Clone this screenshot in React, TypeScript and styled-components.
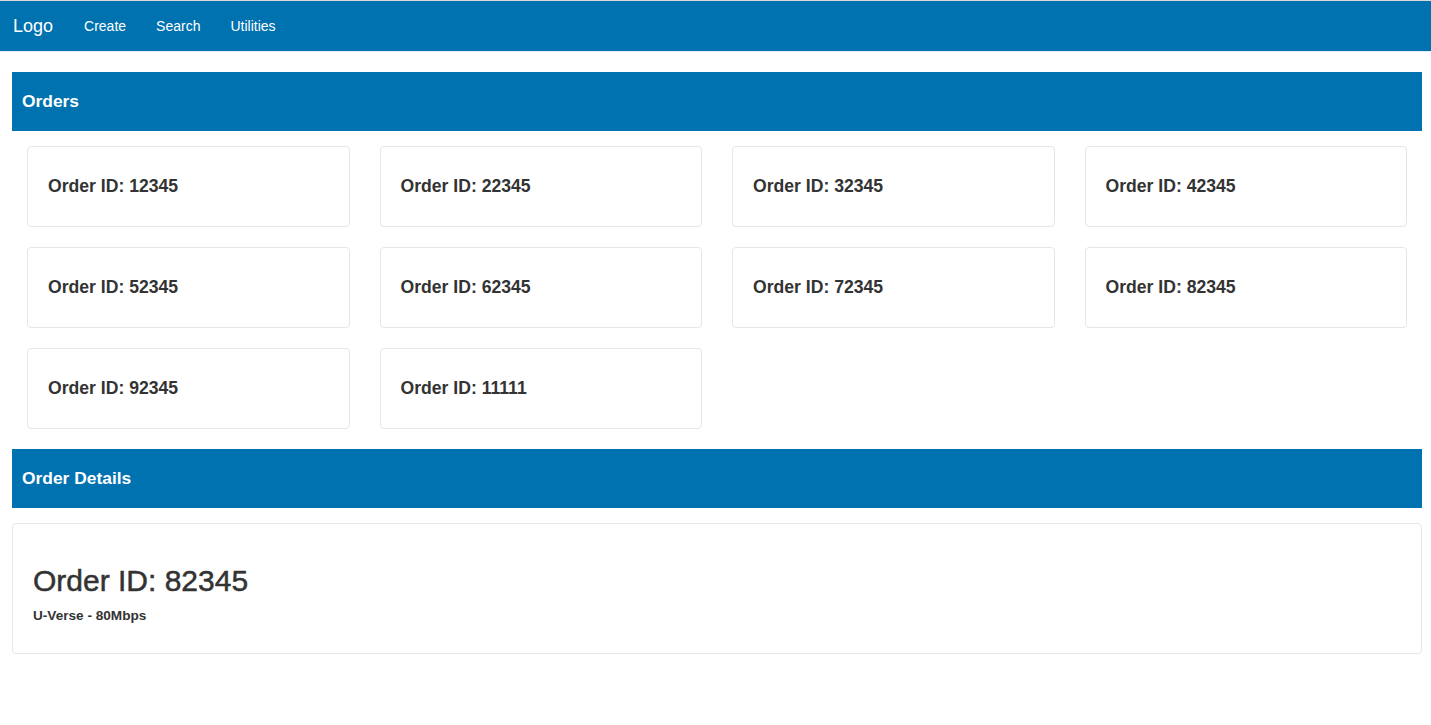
import React from "react";
import styled, { createGlobalStyle } from "styled-components";

const GlobalStyle = createGlobalStyle`
  * { box-sizing: border-box; }
  html, body { margin: 0; padding: 0; background: #fff; }
  body {
    font-family: "Liberation Sans", Arial, Helvetica, sans-serif;
    color: #333;
  }
`;

const BLUE = "#0072b0";

const NavBar = styled.nav`
  display: flex;
  align-items: center;
  height: 52px;
  background: ${BLUE};
  border-top: 1px solid #d9d9d9;
  border-bottom: 1px solid #e3edf3;
`;

const Brand = styled.a`
  padding: 0 16px 0 13px;
  font-size: 18px;
  color: #fff;
  text-decoration: none;
`;

const NavLink = styled.a`
  padding: 0 15px;
  font-size: 14px;
  color: #fff;
  text-decoration: none;
`;

const Main = styled.main`
  padding: 20px 9px 0 12px;
`;

const SectionHeader = styled.h3`
  margin: 0;
  height: 59px;
  display: flex;
  align-items: center;
  padding: 0 10px;
  background: ${BLUE};
  color: #fff;
  font-size: 17.4px;
  font-weight: 700;
`;

const OrderGrid = styled.div`
  display: grid;
  grid-template-columns: repeat(4, 1fr);
  column-gap: 30px;
  row-gap: 20px;
  padding: 15px 15px 20px;
`;

const OrderCard = styled.div`
  height: 81px;
  display: flex;
  align-items: center;
  padding: 0 20px;
  border: 1px solid #e6e6e6;
  border-radius: 4px;
  background: #fff;
  font-size: 17.6px;
  font-weight: 700;
  color: #333;
`;

const DetailsCard = styled.div`
  margin-top: 15px;
  padding: 20px;
  border: 1px solid #e6e6e6;
  border-radius: 4px;
`;

const DetailsTitle = styled.h2`
  margin: 20px 0 10px;
  font-size: 30px;
  line-height: 33px;
  font-weight: 400;
  color: #333;
  -webkit-text-stroke: 0.5px #333;
`;

const DetailsSub = styled.p`
  margin: 0 0 8px;
  font-size: 13.6px;
  line-height: 18px;
  font-weight: 700;
  color: #333;
`;

const orders = ["12345", "22345", "32345", "42345", "52345", "62345", "72345", "82345", "92345", "11111"];

export default function App() {
  return (
    <>
      <GlobalStyle />
      <NavBar>
        <Brand href="#">Logo</Brand>
        <NavLink href="#">Create</NavLink>
        <NavLink href="#">Search</NavLink>
        <NavLink href="#">Utilities</NavLink>
      </NavBar>
      <Main>
        <SectionHeader>Orders</SectionHeader>
        <OrderGrid>
          {orders.map((id) => (
            <OrderCard key={id}>Order ID: {id}</OrderCard>
          ))}
        </OrderGrid>
        <SectionHeader>Order Details</SectionHeader>
        <DetailsCard>
          <DetailsTitle>Order ID: 82345</DetailsTitle>
          <DetailsSub>U-Verse - 80Mbps</DetailsSub>
        </DetailsCard>
      </Main>
    </>
  );
}
